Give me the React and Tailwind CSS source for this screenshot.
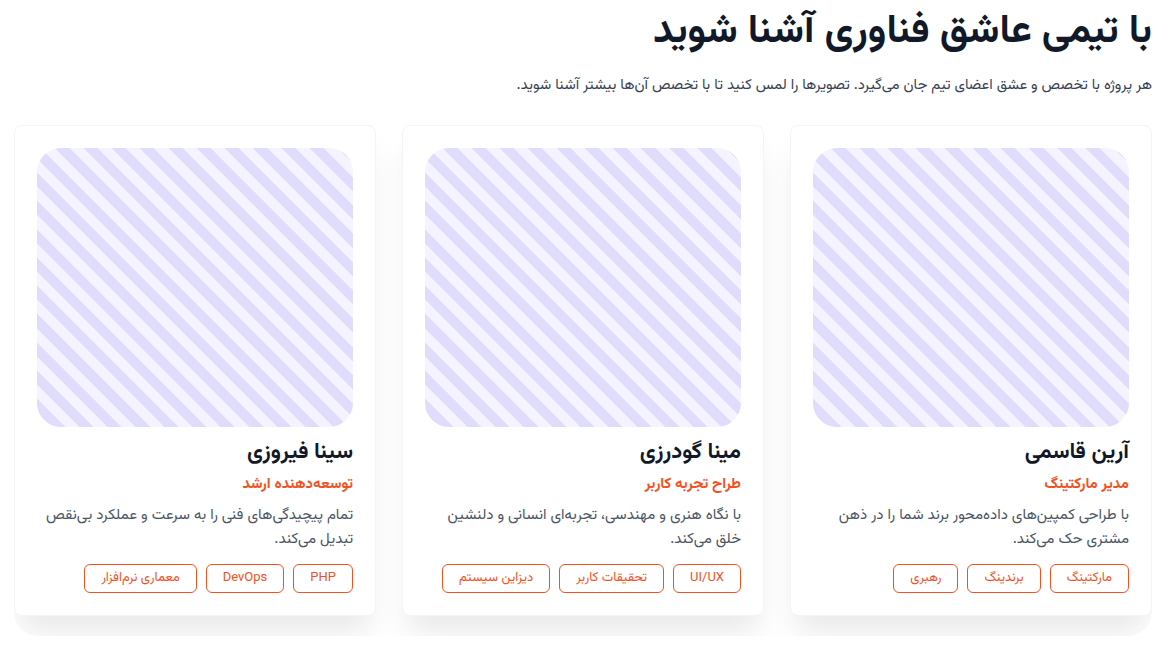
const members = [
  {
    name: "آرین قاسمی",
    role: "مدیر مارکتینگ",
    bio: ["با طراحی کمپین‌های داده‌محور برند شما را در ذهن", "مشتری حک می‌کند."],
    tags: ["مارکتینگ", "برندینگ", "رهبری"],
  },
  {
    name: "مینا گودرزی",
    role: "طراح تجربه کاربر",
    bio: ["با نگاه هنری و مهندسی، تجربه‌ای انسانی و دلنشین", "خلق می‌کند."],
    tags: ["UI/UX", "تحقیقات کاربر", "دیزاین سیستم"],
  },
  {
    name: "سینا فیروزی",
    role: "توسعه‌دهنده ارشد",
    bio: ["تمام پیچیدگی‌های فنی را به سرعت و عملکرد بی‌نقص", "تبدیل می‌کند."],
    tags: ["PHP", "DevOps", "معماری نرم‌افزار"],
  },
];

function MemberCard({ m }) {
  return (
    <div className="bg-white border border-gray-100 rounded-lg p-[22px] shadow-[0_22px_30px_-6px_rgba(0,0,0,0.09)]">
      {/* placeholder photo */}
      <div className="h-[279px] rounded-3xl bg-[repeating-linear-gradient(45deg,#f5f3ff_0px,#f5f3ff_10px,#e0ddfc_10px,#e0ddfc_20px)]" />

      <h3 className="mt-3 text-[22px] font-bold text-[#111827] leading-7">{m.name}</h3>
      <p className="mt-[6px] text-[15px] font-bold text-[#f4511e] leading-6">{m.role}</p>
      <p className="mt-[7px] text-[15px] text-gray-600 leading-6 whitespace-nowrap">
        {m.bio[0]}
        <br />
        {m.bio[1]}
      </p>

      <div className="mt-3 flex flex-wrap gap-[9px]">
        {m.tags.map((t) => (
          <span
            key={t}
            className="px-4 h-[29px] flex items-center border border-[#f4511e] rounded-md text-[13px] text-[#f4511e]"
          >
            {t}
          </span>
        ))}
      </div>
    </div>
  );
}

export default function App() {
  return (
    <div dir="rtl" className="bg-white min-h-screen px-[14px] pt-[6px] font-['Vazirmatn','DejaVu_Sans',sans-serif]">
      <h1 className="text-[40px] font-bold text-[#111827] leading-[52px]">با تیمی عاشق فناوری آشنا شوید</h1>
      <p className="mt-4 text-[14.8px] text-gray-700 leading-6">
        هر پروژه با تخصص و عشق اعضای تیم جان می‌گیرد. تصویرها را لمس کنید تا با تخصص آن‌ها بیشتر آشنا شوید.
      </p>

      {/* cards row */}
      <div className="mt-[27px] rounded-b-3xl overflow-hidden pb-5">
        <div className="grid grid-cols-3 gap-[26px]">
          {members.map((m) => (
            <MemberCard key={m.name} m={m} />
          ))}
        </div>
      </div>
    </div>
  );
}
